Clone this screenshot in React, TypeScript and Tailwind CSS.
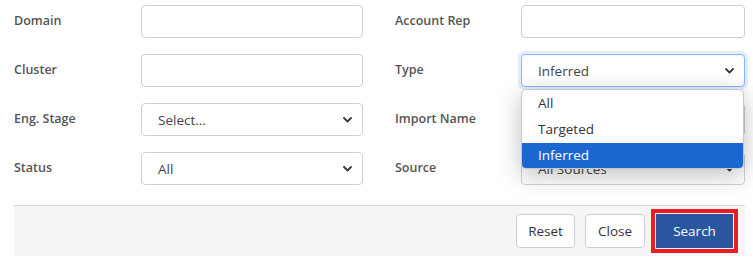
import React from 'react';

const font = { fontFamily: '"Open Sans", "Noto Sans", Arial, sans-serif' };

const Chevron: React.FC = () => (
  <svg width="9" height="6" viewBox="0 0 9 6" className="shrink-0">
    <path d="M1 1l3.5 3.5L8 1" fill="none" stroke="#343a40" strokeWidth="1.8" strokeLinecap="round" strokeLinejoin="round" />
  </svg>
);

const Field: React.FC<{ value?: string; select?: boolean; focus?: boolean; wide?: boolean }> = ({ value, select, focus, wide }) => (
  <div
    className={`flex h-[33px] items-center justify-between rounded-[4px] border bg-white pl-4 pr-[10px] text-[13.5px] text-[#444] ${
      wide ? 'w-[224px]' : 'w-[222px]'
    } ${focus ? 'border-[#86b7fe] shadow-[0_0_0_3px_rgba(13,110,253,0.12)]' : 'border-[#cfcfcf]'}`}
  >
    <span className="pt-[2px]">{value}</span>
    {select && <Chevron />}
  </div>
);

const Label: React.FC<{ text: string; w: string }> = ({ text, w }) => (
  <div className={`${w} text-[12.5px] font-semibold text-[#555]`}>{text}</div>
);

const Row: React.FC<{ children: React.ReactNode }> = ({ children }) => (
  <div className="flex h-[33px] items-center">{children}</div>
);

export default function App() {
  return (
    <div className="relative h-[272px] w-[753px] overflow-hidden bg-white" style={font}>
      <div className="flex flex-col gap-4 pl-[14px] pt-[5px]">
        <Row>
          <Label text="Domain" w="w-[127px]" />
          <Field />
          <div className="w-[32px]" />
          <Label text="Account Rep" w="w-[126px]" />
          <Field wide />
        </Row>
        <Row>
          <Label text="Cluster" w="w-[127px]" />
          <Field />
          <div className="w-[32px]" />
          <Label text="Type" w="w-[126px]" />
          <div className="relative">
            <Field wide select focus value="Inferred" />
            {/* open dropdown list */}
            <div className="absolute left-0 top-[35px] z-10 w-[223px] overflow-hidden rounded-[5px] border border-[#c8c8c8] bg-white text-[13.5px] text-[#333] shadow-[0_6px_24px_rgba(0,0,0,0.25)]">
              <div className="flex h-[26px] items-center pl-4">All</div>
              <div className="flex h-[27px] items-center pl-4">Targeted</div>
              <div className="flex h-[25px] items-center bg-[#1a67d2] pl-4 text-white">Inferred</div>
            </div>
          </div>
        </Row>
        <Row>
          <Label text="Eng. Stage" w="w-[127px]" />
          <Field select value="Select..." />
          <div className="w-[32px]" />
          <Label text="Import Name" w="w-[126px]" />
          <Field wide />
        </Row>
        <Row>
          <Label text="Status" w="w-[127px]" />
          <Field select value="All" />
          <div className="w-[32px]" />
          <Label text="Source" w="w-[126px]" />
          <Field wide select value="All Sources" />
        </Row>
      </div>

      <div className="ml-[14px] mt-[20px] flex h-[51px] w-[731px] items-center justify-end gap-[10px] border-t border-[#dcdcdc] bg-[#f5f5f5] pr-[7px]">
        <button className="h-[34px] w-[59px] rounded-[4px] border border-[#cfcfcf] bg-white text-[13.5px] text-[#333]">Reset</button>
        <button className="h-[34px] w-[60px] rounded-[4px] border border-[#cfcfcf] bg-white text-[13.5px] text-[#333]">Close</button>
        <div className="-ml-[4px] border-[4px] border-[#ea1c24] p-[1px]">
          <button className="h-[34px] w-[77px] bg-[#2a56a0] text-[13.5px] text-white">Search</button>
        </div>
      </div>
    </div>
  );
}
